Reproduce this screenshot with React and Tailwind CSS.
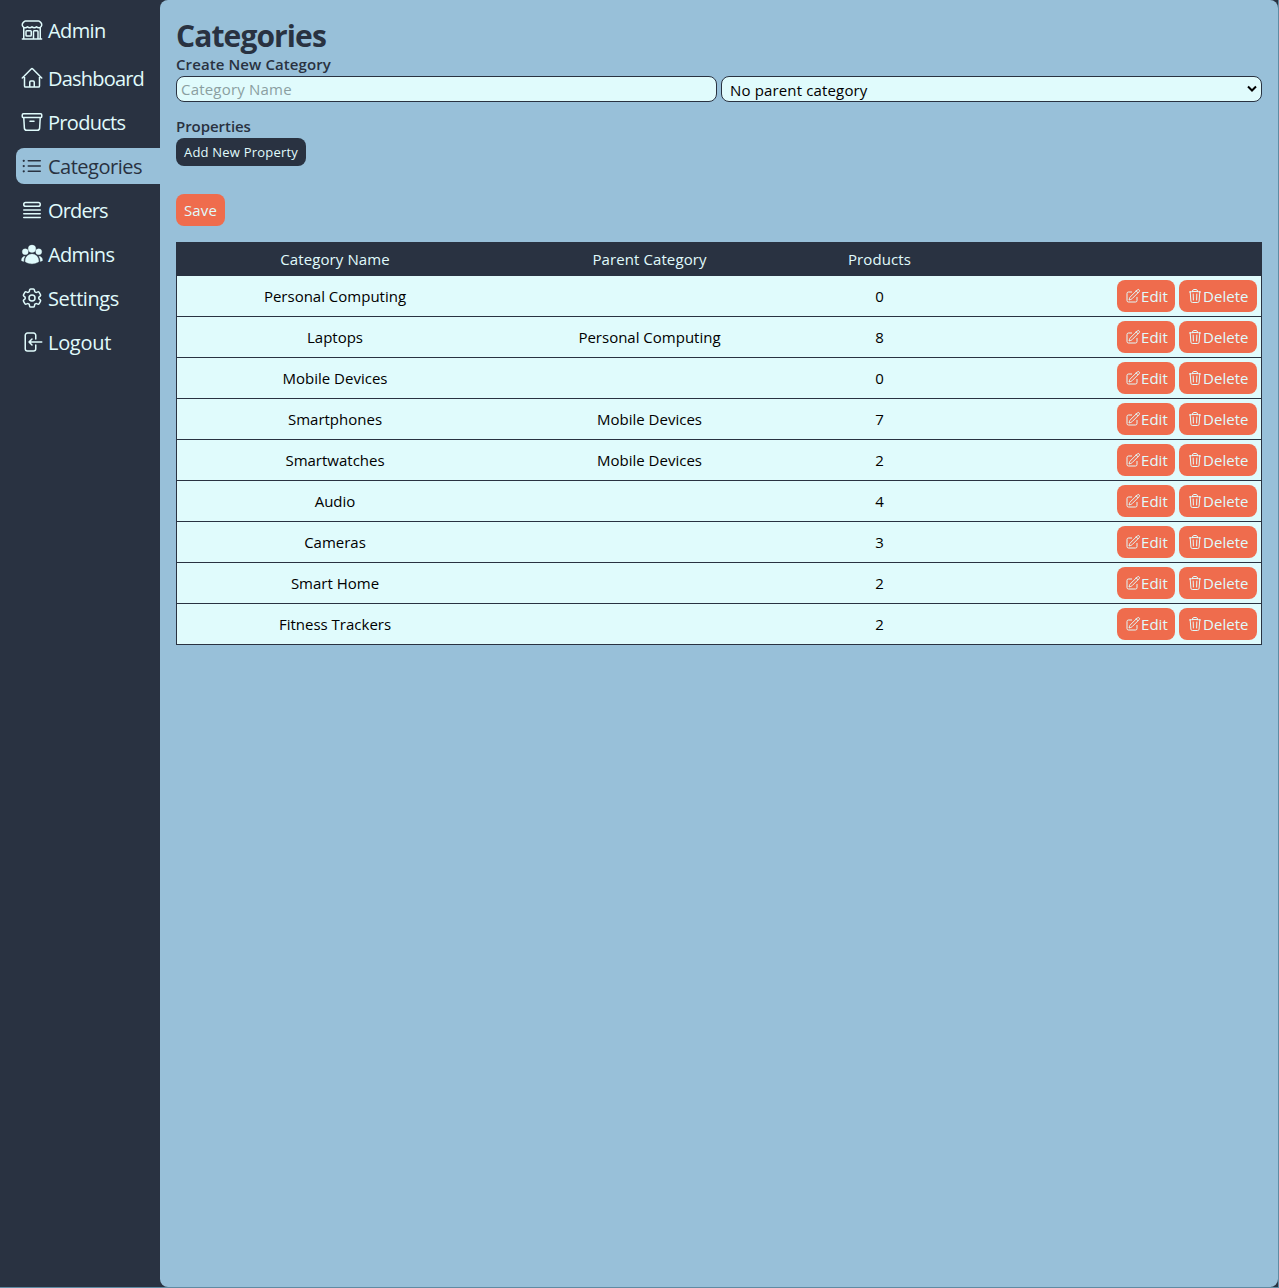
import {
  HiOutlineBuildingStorefront, HiOutlineHome, HiOutlineArchiveBox, HiOutlineListBullet,
  HiOutlineQueueList, HiUserGroup, HiOutlineCog6Tooth, HiOutlineArrowLeftOnRectangle,
  HiOutlinePencilSquare, HiOutlineTrash,
} from "react-icons/hi2";

const nav = [
  { label: "Dashboard", Icon: HiOutlineHome, track: "tracking-[-0.8px]" },
  { label: "Products", Icon: HiOutlineArchiveBox, track: "tracking-[-0.7px]" },
  { label: "Categories", Icon: HiOutlineListBullet, track: "tracking-[-0.5px]", active: true },
  { label: "Orders", Icon: HiOutlineQueueList, track: "tracking-[-0.85px]" },
  { label: "Admins", Icon: HiUserGroup, track: "tracking-[-0.65px]", solid: true },
  { label: "Settings", Icon: HiOutlineCog6Tooth, track: "tracking-[-0.4px]" },
  { label: "Logout", Icon: HiOutlineArrowLeftOnRectangle, track: "tracking-[-0.3px]" },
];

const rows = [
  ["Personal Computing", "", 0],
  ["Laptops", "Personal Computing", 8],
  ["Mobile Devices", "", 0],
  ["Smartphones", "Mobile Devices", 7],
  ["Smartwatches", "Mobile Devices", 2],
  ["Audio", "", 4],
  ["Cameras", "", 3],
  ["Smart Home", "", 2],
  ["Fitness Trackers", "", 2],
];

const columns = "grid grid-cols-[316px_313px_147px_1fr] items-center";

function RowButton({ Icon, label, width }) {
  return (
    <button className={`flex h-8 items-center rounded-lg bg-[#ef6c4d] pl-2 text-[15px] text-[#e0fbfc] ${width}`}>
      <Icon className="size-4 shrink-0" />
      <span className="tracking-[0.05px]">{label}</span>
    </button>
  );
}

export default function App() {
  return (
    <div className="flex h-[1288px] border-r border-b border-[#5f8ba3] bg-[#293241] font-['Open_Sans',sans-serif] text-[#293241]">
      <aside className="w-40 shrink-0 pl-4 text-xl text-[#e0fbfc]">
        <div className="mt-3 mb-3 flex h-9 items-center gap-1 pl-1">
          <HiOutlineBuildingStorefront className="size-6" />
          <span className="pt-0.5 tracking-[-0.6px]">Admin</span>
        </div>
        <nav className="flex flex-col gap-2">
          {nav.map(({ label, Icon, track, active, solid }) => (
            <a key={label} className={`flex h-9 items-center gap-1 rounded-l-lg pl-1 ${active ? "bg-[#98c0d9] text-[#293241]" : ""}`}>
              <Icon className={`size-6 shrink-0 ${solid ? "stroke-current stroke-[0.3]" : ""}`} />
              <span className={`pt-0.5 ${track}`}>{label}</span>
            </a>
          ))}
        </nav>
      </aside>
      <main className="min-w-0 flex-1 rounded-lg bg-[#98c0d9] pt-4 pr-4 pl-4">
        <h1 className="h-10 text-[30px] leading-10 font-bold tracking-[-0.9px]">Categories</h1>
        <div className="h-5 text-[15px] leading-4 font-semibold tracking-[0.1px]">Create New Category</div>
        <div className="grid grid-cols-2 gap-1">
          <input placeholder="Category Name" className="h-[26px] min-w-0 rounded-lg border border-[#293241] bg-[#e0fbfc] px-1 text-[15px] tracking-[0.2px] placeholder:text-[#8b9fa1]" />
          <div className="flex h-[26px] min-w-0 items-center justify-between rounded-lg border border-[#293241] bg-[#e0fbfc] pr-1 pl-2 text-[15px] text-black">
            <span className="pt-0.5 tracking-[0.15px]">No parent category</span>
            <svg width="10" height="8" viewBox="0 0 10 8" fill="none" stroke="currentColor" strokeWidth="2"><path d="M1 1.5l4 4 4-4" /></svg>
          </div>
        </div>
        <div className="mt-4 h-5 text-[15px] leading-4 font-semibold tracking-[-0.05px]">Properties</div>
        <button className="flex h-7 w-[130px] items-center justify-center rounded-lg bg-[#293241] pt-px text-[13px] text-[#e0fbfc]">
          <span className="font-medium tracking-[0.2px] whitespace-nowrap">Add New Property</span>
        </button>
        <button className="mt-7 flex h-8 w-[49px] items-center justify-center rounded-lg bg-[#ef6c4d] text-[15px] tracking-[0.1px] text-[#e0fbfc]">Save</button>
        <div className="mt-4 border border-[#293241] bg-[#e0fbfc] text-center text-[15px] text-black">
          <div className={`${columns} h-[33px] bg-[#293241] tracking-[0.1px] text-[#e0fbfc]`}>
            <div>Category Name</div>
            <div>Parent Category</div>
            <div>Products</div>
          </div>
          {rows.map(([name, parent, count], i) => (
            <div key={name} className={`${columns} ${i < rows.length - 1 ? "h-[41px] border-b border-[#293241]" : "h-10"}`}>
              <div>{name}</div>
              <div>{parent}</div>
              <div>{count}</div>
              <div className="flex justify-end gap-1 pr-1">
                <RowButton Icon={HiOutlinePencilSquare} label="Edit" width="w-[58px]" />
                <RowButton Icon={HiOutlineTrash} label="Delete" width="w-[78px]" />
              </div>
            </div>
          ))}
        </div>
      </main>
    </div>
  );
}
